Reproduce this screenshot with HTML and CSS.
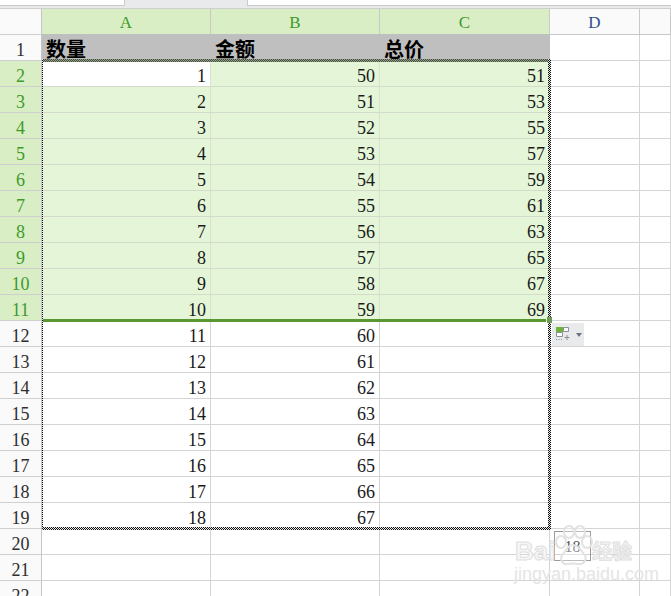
FILE: index.html
```html
<!DOCTYPE html>
<html lang="zh">
<head>
<meta charset="utf-8">
<title>表格</title>
<link rel="stylesheet" href="styles.css">
</head>
<body>
<div class="topbar">
  <div class="tab tab-first"></div>
  <div class="tab-gap"></div>
  <div class="tab tab-last"></div>
</div>
<div class="sheet">
  <div class="row colhead">
    <div class="rh corner"></div><div class="c on">A</div><div class="c on">B</div><div class="c on">C</div><div class="c">D</div><div class="c"></div>
  </div>
  <div class="row title">
    <div class="rh">1</div><div class="cell t">数量</div><div class="cell t">金额</div><div class="cell t">总价</div><div class="cell"></div><div class="cell"></div>
  </div>
  <div class="row sel"><div class="rh">2</div><div class="cell active">1</div><div class="cell">50</div><div class="cell">51</div><div class="cell"></div><div class="cell"></div></div>
  <div class="row sel"><div class="rh">3</div><div class="cell">2</div><div class="cell">51</div><div class="cell">53</div><div class="cell"></div><div class="cell"></div></div>
  <div class="row sel"><div class="rh">4</div><div class="cell">3</div><div class="cell">52</div><div class="cell">55</div><div class="cell"></div><div class="cell"></div></div>
  <div class="row sel"><div class="rh">5</div><div class="cell">4</div><div class="cell">53</div><div class="cell">57</div><div class="cell"></div><div class="cell"></div></div>
  <div class="row sel"><div class="rh">6</div><div class="cell">5</div><div class="cell">54</div><div class="cell">59</div><div class="cell"></div><div class="cell"></div></div>
  <div class="row sel"><div class="rh">7</div><div class="cell">6</div><div class="cell">55</div><div class="cell">61</div><div class="cell"></div><div class="cell"></div></div>
  <div class="row sel"><div class="rh">8</div><div class="cell">7</div><div class="cell">56</div><div class="cell">63</div><div class="cell"></div><div class="cell"></div></div>
  <div class="row sel"><div class="rh">9</div><div class="cell">8</div><div class="cell">57</div><div class="cell">65</div><div class="cell"></div><div class="cell"></div></div>
  <div class="row sel"><div class="rh">10</div><div class="cell">9</div><div class="cell">58</div><div class="cell">67</div><div class="cell"></div><div class="cell"></div></div>
  <div class="row sel"><div class="rh">11</div><div class="cell">10</div><div class="cell">59</div><div class="cell">69</div><div class="cell"></div><div class="cell"></div></div>
  <div class="row"><div class="rh">12</div><div class="cell">11</div><div class="cell">60</div><div class="cell"></div><div class="cell"></div><div class="cell"></div></div>
  <div class="row"><div class="rh">13</div><div class="cell">12</div><div class="cell">61</div><div class="cell"></div><div class="cell"></div><div class="cell"></div></div>
  <div class="row"><div class="rh">14</div><div class="cell">13</div><div class="cell">62</div><div class="cell"></div><div class="cell"></div><div class="cell"></div></div>
  <div class="row"><div class="rh">15</div><div class="cell">14</div><div class="cell">63</div><div class="cell"></div><div class="cell"></div><div class="cell"></div></div>
  <div class="row"><div class="rh">16</div><div class="cell">15</div><div class="cell">64</div><div class="cell"></div><div class="cell"></div><div class="cell"></div></div>
  <div class="row"><div class="rh">17</div><div class="cell">16</div><div class="cell">65</div><div class="cell"></div><div class="cell"></div><div class="cell"></div></div>
  <div class="row"><div class="rh">18</div><div class="cell">17</div><div class="cell">66</div><div class="cell"></div><div class="cell"></div><div class="cell"></div></div>
  <div class="row"><div class="rh">19</div><div class="cell">18</div><div class="cell">67</div><div class="cell"></div><div class="cell"></div><div class="cell"></div></div>
  <div class="row"><div class="rh">20</div><div class="cell"></div><div class="cell"></div><div class="cell"></div><div class="cell"></div><div class="cell"></div></div>
  <div class="row"><div class="rh">21</div><div class="cell"></div><div class="cell"></div><div class="cell"></div><div class="cell"></div><div class="cell"></div></div>
  <div class="row"><div class="rh">22</div><div class="cell"></div><div class="cell"></div><div class="cell"></div><div class="cell"></div><div class="cell"></div></div>

  <div class="ants ants-top"></div>
  <div class="ants ants-left"></div>
  <div class="ants ants-right"></div>
  <div class="green-bottom"></div>
  <div class="ants ants-bottom"></div>
  <div class="handle"></div>

  <div class="paste-btn">
    <svg class="paste-icon" width="14" height="14" viewBox="0 0 14 14" aria-hidden="true">
      <rect x="0" y="0" width="7" height="5" fill="#6fb43a"/>
      <path d="M7.5 .5h5v4h-5zM.5 5.500h6v4h-6z" fill="#fff" stroke="#8a8f99"/>
      <path d="M0 12.500h1M2.500 12.500h1M5 12.500h1" stroke="#8a8f99"/>
      <path d="M11 8v5M8.500 10.500h5" stroke="#8a8f99"/>
    </svg>
    <svg class="paste-caret" width="6" height="4" viewBox="0 0 6 4" aria-hidden="true"><path d="M0 0h6L3 4z" fill="#6f7480"/></svg>
  </div>

  <div class="tip">18</div>

  <div class="mark">
    <svg class="paw" width="40" height="42" viewBox="0 0 40 42" aria-hidden="true">
      <g fill="#fff" fill-opacity=".35" stroke="#e2e2e2" stroke-width="2">
        <ellipse cx="8" cy="17" rx="5" ry="6"/>
        <ellipse cx="16" cy="7" rx="5" ry="6"/>
        <ellipse cx="27" cy="7" rx="5" ry="6"/>
        <ellipse cx="34" cy="17" rx="5" ry="6"/>
        <path d="M20 20c6 0 8 6 11 9 4 5 0 11-6 10-3-.5-7-.5-10 0-6 1-9-5-5-10 3-3 4-9 10-9z"/>
      </g>
    </svg>
    <span class="mark-bai">Bai</span><span class="mark-du">经验</span>
    <span class="mark-url">jingyan.baidu.com</span>
  </div>
</div>
</body>
</html>
```

FILE: styles.css
```css
html, body {
  margin: 0;
  height: 596px;
  overflow: hidden;
  background: #fff;
}

body {
  font-family: "Liberation Serif", "Noto Sans CJK SC", serif;
  font-size: 18px;
  color: #1a1a1a;
}

.topbar {
  display: flex;
  height: 9px;
  box-sizing: border-box;
  background: #e9eaec;
  border-bottom: 1px solid #cfcfcf;
  align-items: flex-start;
}

.tab {
  height: 6px;
  box-sizing: border-box;
  background: #fff;
  border-bottom: 1px solid #c9c9c9;
}

.tab-first { width: 125px; border-right: 1px solid #c9c9c9; }
.tab-gap { width: 122px; }
.tab-last { flex: 1; border-left: 1px solid #c9c9c9; }

.sheet { position: relative; }

.row {
  display: grid;
  grid-template-columns: 42px 169px 169px 170px 90px 31px;
  height: 26px;
}

.rh, .cell, .c {
  box-sizing: border-box;
  border-right: 1px solid #d4d4d4;
  border-bottom: 1px solid #d4d4d4;
  height: 26px;
  line-height: 30px;
}

.rh {
  background: #fafafa;
  border-right-color: #c4c4c4;
  border-bottom-color: #cfcfcf;
  text-align: center;
  color: #2f2f2f;
}

.cell {
  text-align: right;
  padding-right: 4px;
  background: #fff;
}

.colhead .c {
  background: #fafafa;
  border-right-color: #c8c8c8;
  border-bottom-color: #c8c8c8;
  text-align: center;
  font-size: 17px;
  line-height: 28px;
  color: #2f4f8f;
}

.colhead .corner { background: #fafafa; }

.colhead .on {
  background: #d9eec5;
  color: #3f9a2c;
  border-bottom-color: #bfbfbf;
}

.title .t {
  background: #bfbfbf;
  border-right: 0;
  border-bottom: 0;
  text-align: left;
  padding: 0 0 0 4px;
  font-family: "Noto Sans CJK SC", sans-serif;
  font-weight: 700;
  font-size: 20px;
  line-height: 27px;
  color: #000;
}

.sel .rh {
  background: #d9eec5;
  color: #3f9a2c;
}

.sel .cell:nth-child(2),
.sel .cell:nth-child(3),
.sel .cell:nth-child(4) {
  background: #e4f6d7;
  border-right-color: #d8e2cf;
  border-bottom-color: #d3dccb;
}

.sel .cell.active { background: #fff; }

.ants {
  position: absolute;
  background: repeating-conic-gradient(#111 0 25%, #e8e8e8 0 50%) 0 0 / 2px 2px;
}

.ants-top { left: 42px; top: 50px; width: 508px; height: 3px; background-image: repeating-conic-gradient(#4a4a4a 0 25%, #8ea37e 0 50%); }
.ants-left { left: 42px; top: 50px; width: 1px; height: 471px; }
.ants-right { left: 548px; top: 50px; width: 3px; height: 471px; }
.ants-bottom { left: 42px; top: 518px; width: 509px; height: 3px; }

.green-bottom {
  position: absolute;
  left: 43px;
  top: 310px;
  width: 503px;
  height: 3px;
  background: #5a9632;
}

.handle {
  position: absolute;
  left: 547px;
  top: 308px;
  width: 5px;
  height: 6px;
  background: #6f9a58;
}

.paste-btn {
  position: absolute;
  left: 552px;
  top: 314px;
  width: 32px;
  height: 23px;
  box-sizing: border-box;
  padding: 4px 0 0 4px;
  background: #e9eaec;
  display: flex;
  align-items: flex-start;
  gap: 6px;
}

.paste-caret { margin-top: 6px; }

.tip {
  position: absolute;
  left: 554px;
  top: 522px;
  width: 37px;
  height: 30px;
  box-sizing: border-box;
  border: 1px solid #9a9a9a;
  text-align: center;
  line-height: 30px;
  font-size: 16px;
  color: #555;
}

.mark {
  position: absolute;
  left: 512px;
  top: 514px;
  width: 130px;
  height: 62px;
  color: #f6f6f6;
  -webkit-text-stroke: 1px #e0e0e0;
  font-family: "Liberation Sans", "Noto Sans CJK SC", sans-serif;
  white-space: nowrap;
}

.paw { position: absolute; left: 41px; top: 2px; }

.mark-bai {
  position: absolute;
  left: 3px;
  top: 17px;
  font-size: 26px;
  font-weight: 700;
  line-height: 22px;
}

.mark-du {
  position: absolute;
  left: 80px;
  top: 17px;
  font-size: 20px;
  line-height: 24px;
  font-weight: 700;
}

.mark-url {
  position: absolute;
  left: 2px;
  top: 43px;
  font-size: 18px;
  line-height: 16px;
  color: #e4e4e4;
  -webkit-text-stroke: 0;
}
```
